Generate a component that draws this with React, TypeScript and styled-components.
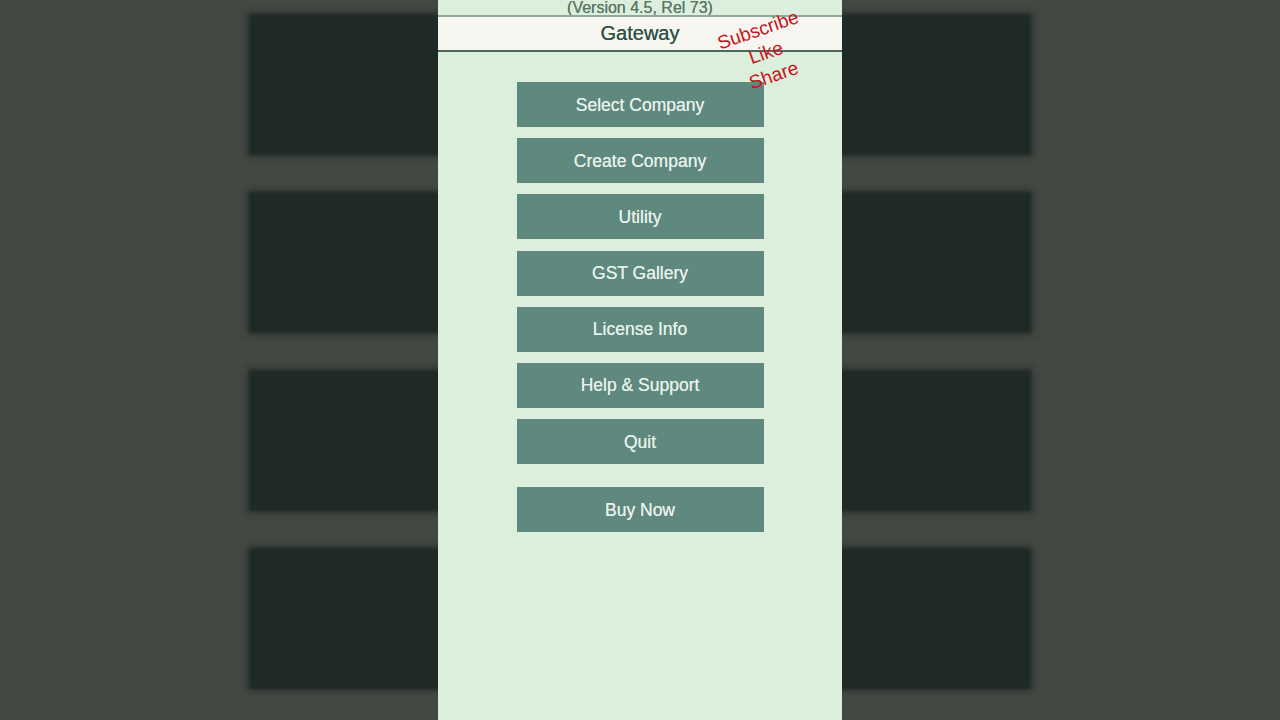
import React from "react";
import styled, { createGlobalStyle } from "styled-components";

const Global = createGlobalStyle`
  html, body { margin: 0; padding: 0; width: 100%; height: 100%; overflow: hidden; }
  body { background: #444843; font-family: "Liberation Sans", Arial, sans-serif; }
  #root { width: 100%; height: 100%; }
`;

const Stage = styled.div`
  display: grid;
  width: 1280px;
  height: 720px;
  overflow: hidden;
  background: #444843;
  & > * { grid-area: 1 / 1; }
`;

const Backdrop = styled.div`
  display: flex;
  flex-direction: column;
  align-items: center;
  gap: 37px;
  padding-top: 14px;
  filter: blur(1.5px);
`;

const BlurCard = styled.div`
  width: 782px;
  height: 141px;
  flex: none;
  background: #1f2a27;
  box-shadow: 0 0 6px 2px rgba(20, 28, 25, 0.45);
`;

const Phone = styled.div`
  justify-self: center;
  position: relative;
  width: 404px;
  height: 720px;
  background: #dcefdc;
  display: flex;
  flex-direction: column;
  align-items: stretch;
`;

const Version = styled.div`
  height: 15px;
  line-height: 15px;
  font-size: 16px;
  color: #5a7869;
  text-align: center;
  margin-top: -3px;
  padding-top: 3px;
  overflow: hidden;
  border-bottom: 2px solid #91a99c;
  text-shadow: 0 0 0.5px #5a7869;
`;

const Header = styled.div`
  height: 33px;
  background: #f7f6f1;
  border-bottom: 2px solid #4b6a5f;
  display: flex;
  align-items: center;
  justify-content: center;
  font-size: 20px;
  color: #2f5548;
  text-shadow: 0 0 0.5px #2f5548;
`;

const Menu = styled.div`
  display: flex;
  flex-direction: column;
  align-items: center;
  gap: 11.2px;
  padding-top: 30px;
`;

const MenuButton = styled.div<{ $spaced?: boolean }>`
  width: 247px;
  height: 45px;
  box-sizing: border-box;
  padding-top: 1px;
  flex: none;
  display: flex;
  align-items: center;
  justify-content: center;
  background: #5f887e;
  color: #e7f0ea;
  font-size: 17.5px;
  text-shadow: 0 0 0.6px #e7f0ea;
  margin-top: ${(p) => (p.$spaced ? "12px" : "0")};
`;

const Promo = styled.div`
  position: absolute;
  left: 273px;
  top: 17px;
  width: 110px;
  display: flex;
  flex-direction: column;
  align-items: center;
  transform: rotate(-19deg);
  transform-origin: 50% 50%;
  color: #c8141c;
  font-size: 19px;
  line-height: 24px;
`;

const PromoLine = styled.span`
  white-space: nowrap;
`;

const items = [
  "Select Company",
  "Create Company",
  "Utility",
  "GST Gallery",
  "License Info",
  "Help & Support",
  "Quit",
];

export default function App() {
  return (
    <>
      <Global />
      <Stage>
        <Backdrop>
          <BlurCard />
          <BlurCard />
          <BlurCard />
          <BlurCard />
        </Backdrop>
        <Phone>
          <Version>(Version 4.5, Rel 73)</Version>
          <Header>Gateway</Header>
          <Menu>
            {items.map((t) => (
              <MenuButton key={t}>{t}</MenuButton>
            ))}
            <MenuButton $spaced>Buy Now</MenuButton>
          </Menu>
          <Promo>
            <PromoLine>Subscribe</PromoLine>
            <PromoLine>Like</PromoLine>
            <PromoLine>Share</PromoLine>
          </Promo>
        </Phone>
      </Stage>
    </>
  );
}
